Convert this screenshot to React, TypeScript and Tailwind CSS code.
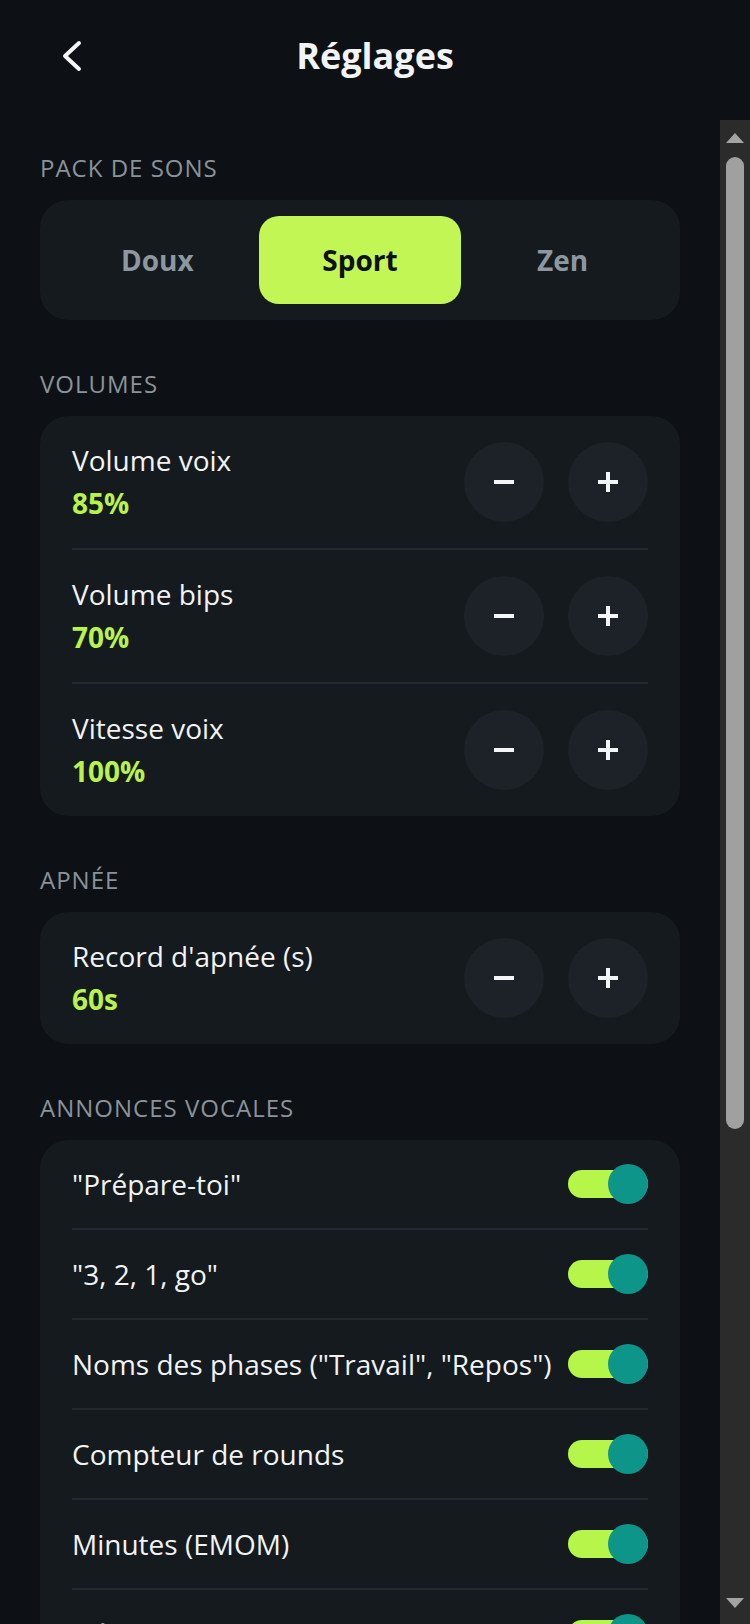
import { useState } from 'react'

type Stepper = { label: string; value: string }

const volumes: Stepper[] = [
  { label: 'Volume voix', value: '85%' },
  { label: 'Volume bips', value: '70%' },
  { label: 'Vitesse voix', value: '100%' },
]

const announces = [
  '"Prépare-toi"',
  '"3, 2, 1, go"',
  'Noms des phases ("Travail", "Repos")',
  'Compteur de rounds',
  'Minutes (EMOM)',
  'Décompte final',
  'Mi-parcours',
]

function SectionLabel({ children }: { children: string }) {
  return (
    <p className="px-[40px] mb-[16px] text-[24px] leading-[32px] tracking-[1px] uppercase text-[#8a939a]">
      {children}
    </p>
  )
}

function Divider() {
  return <div className="mx-[32px] h-[2px] bg-[#23292e]" />
}

function RoundButton({ kind }: { kind: 'minus' | 'plus' }) {
  return (
    <button className="w-[80px] h-[80px] rounded-full bg-[#1c2227] flex items-center justify-center">
      <svg width="20" height="20" viewBox="0 0 20 20">
        <path d="M0 10h20" stroke="#f3f5f6" strokeWidth="4" />
        {kind === 'plus' && <path d="M10 0v20" stroke="#f3f5f6" strokeWidth="4" />}
      </svg>
    </button>
  )
}

function StepperRow({ item }: { item: Stepper }) {
  return (
    <div className="flex items-center justify-between px-[32px] py-[26px]">
      <div>
        <p className="text-[28px] leading-[36px] text-[#f1f3f4]">{item.label}</p>
        <p className="mt-[6px] text-[28px] leading-[38px] font-bold text-[#b9f24f]">{item.value}</p>
      </div>
      <div className="flex gap-[24px]">
        <RoundButton kind="minus" />
        <RoundButton kind="plus" />
      </div>
    </div>
  )
}

function Toggle({ on }: { on: boolean }) {
  return (
    <div className="relative w-[80px] h-[40px] shrink-0 flex items-center">
      <div className={`w-full h-[28px] rounded-full ${on ? 'bg-[#b6f54a]' : 'bg-[#2a3035]'}`} />
      <div
        className={`absolute top-0 w-[40px] h-[40px] rounded-full ${
          on ? 'right-0 bg-[#0e958a]' : 'left-0 bg-[#8a939a]'
        }`}
      />
    </div>
  )
}

export default function App() {
  const [pack, setPack] = useState('Sport')

  return (
    <div className="w-[750px] h-[1624px] overflow-hidden flex flex-col bg-[#0d1014] font-['Open_Sans',sans-serif]">
      <header className="h-[120px] shrink-0 pb-[8px] grid grid-cols-[1fr_auto_1fr] items-center">
        <button className="ml-[60px] w-[24px] h-[36px]">
          <svg width="24" height="36" viewBox="0 0 24 36" fill="none">
            <polyline
              points="19,5 5,18 19,31"
              stroke="#f3f5f6"
              strokeWidth="4"
              strokeLinecap="round"
              strokeLinejoin="round"
            />
          </svg>
        </button>
        <h1 className="text-[36px] leading-[48px] font-bold text-[#f1f3f4]">Réglages</h1>
        <div />
      </header>

      <div className="flex-1 min-h-0 flex">
        <main className="flex-1 min-w-0 overflow-hidden pt-[32px]">
          <section>
            <SectionLabel>Pack de sons</SectionLabel>
            <div className="mx-[40px] rounded-[28px] bg-[#151a1e] p-[16px] grid grid-cols-3">
              {['Doux', 'Sport', 'Zen'].map((p) => (
                <button
                  key={p}
                  onClick={() => setPack(p)}
                  className={`h-[88px] rounded-[20px] text-[28px] font-bold ${
                    pack === p ? 'bg-[#c1f655] text-[#0d1014]' : 'text-[#8c979f]'
                  }`}
                >
                  {p}
                </button>
              ))}
            </div>
          </section>

          <section className="mt-[48px]">
            <SectionLabel>Volumes</SectionLabel>
            <div className="mx-[40px] rounded-[28px] bg-[#151a1e]">
              {volumes.map((v, i) => (
                <div key={v.label}>
                  {i > 0 && <Divider />}
                  <StepperRow item={v} />
                </div>
              ))}
            </div>
          </section>

          <section className="mt-[48px]">
            <SectionLabel>Apnée</SectionLabel>
            <div className="mx-[40px] rounded-[28px] bg-[#151a1e]">
              <StepperRow item={{ label: "Record d'apnée (s)", value: '60s' }} />
            </div>
          </section>

          <section className="mt-[48px]">
            <SectionLabel>Annonces vocales</SectionLabel>
            <div className="mx-[40px] rounded-[28px] bg-[#151a1e]">
              {announces.map((a, i) => (
                <div key={a}>
                  {i > 0 && <Divider />}
                  <div className="flex items-center justify-between gap-[16px] px-[32px] py-[24px]">
                    <p className="text-[28px] leading-[38px] text-[#f1f3f4] whitespace-nowrap">{a}</p>
                    <Toggle on />
                  </div>
                </div>
              ))}
            </div>
          </section>
        </main>

        {/* scrollbar as captured on device */}
        <aside className="w-[30px] shrink-0 bg-[#2b2b2b] flex flex-col items-center">
          <svg className="mt-[13px]" width="18" height="10" viewBox="0 0 18 10">
            <polygon points="9,0 18,10 0,10" fill="#a3a3a3" />
          </svg>
          <div className="mt-[14px] w-[18px] h-[972px] rounded-[9px] bg-[#a0a0a0]" />
          <div className="flex-1" />
          <svg className="mb-[16px]" width="18" height="10" viewBox="0 0 18 10">
            <polygon points="0,0 18,0 9,10" fill="#a3a3a3" />
          </svg>
        </aside>
      </div>
    </div>
  )
}
